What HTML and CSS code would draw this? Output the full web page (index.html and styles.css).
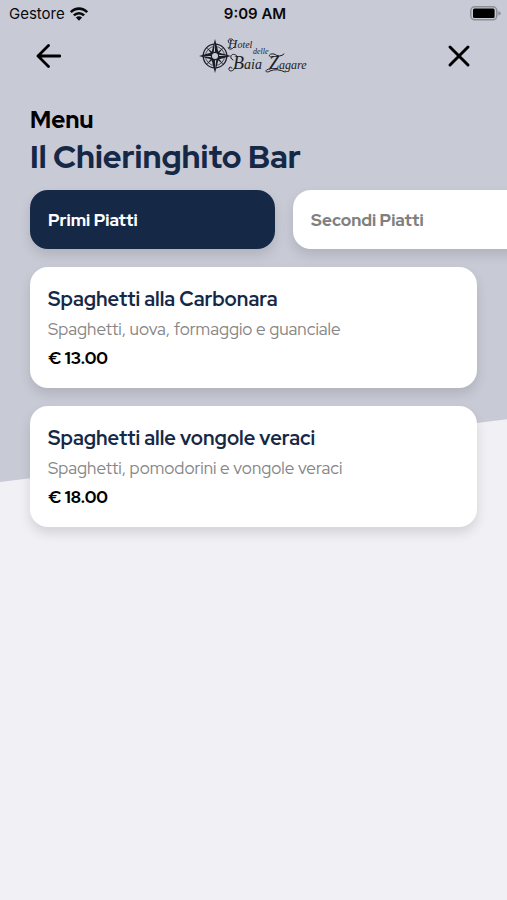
FILE: index.html
```html
<!DOCTYPE html>
<html lang="it">
<head>
<meta charset="utf-8">
<meta name="viewport" content="width=device-width, initial-scale=1">
<title>Il Chieringhito Bar</title>
<link rel="stylesheet" href="styles.css">
</head>
<body>
<div class="screen">
  <div class="status">
    <div class="carrier">
      <span>Gestore</span>
      <svg width="18" height="14" viewBox="0 0 18 14" aria-hidden="true">
        <g fill="none" stroke="#08090c" stroke-width="2.6">
          <path d="M.8 5.2C5.4.4 12.6.4 17.2 5.2"/>
          <path d="M3.9 8.4C6.7 5.5 11.3 5.5 14.1 8.4"/>
        </g>
        <path d="M5.9 10.5C7.7 8.7 10.3 8.7 12.1 10.5L9 13.7Z" fill="#08090c"/>
      </svg>
    </div>
    <time class="clock">9:09 AM</time>
    <svg class="battery" width="31" height="15" viewBox="0 0 31 15" aria-hidden="true">
      <rect x=".8" y=".8" width="26" height="13" rx="4" fill="none" stroke="#8c8e95" stroke-width="1.5"/>
      <rect x="3" y="2.5" width="21.6" height="9.6" rx="1.5" fill="#000"/>
      <path d="M28.3 5Q30.7 5.7 30.7 7.3T28.3 9.6Z" fill="#8c8e95"/>
    </svg>
  </div>

  <header class="nav">
    <button class="icon-button" type="button" aria-label="Indietro">
      <svg width="26" height="26" viewBox="0 0 26 26" fill="none" stroke="#000" stroke-width="2.8" stroke-linecap="round" stroke-linejoin="round">
        <path d="M25 13H3M13.5 2.5L3 13L13.5 23.5"/>
      </svg>
    </button>
    <svg class="logo" width="112" height="40" viewBox="0 0 112 40" role="img" aria-label="Hotel delle Baia Zagare">
      <g fill="none" stroke="#1b1d24">
        <circle cx="17" cy="20" r="11.8" stroke-width="1.3"/>
        <circle cx="17" cy="20" r="9.5" stroke-width=".7"/>
      </g>
      <g fill="#1b1d24">
        <path d="M8 11L15.5 17L17 20L14 18.5ZM26 11L18.5 17L17 20L20 18.5ZM8 29L15.5 23L17 20L14 21.5ZM26 29L18.5 23L17 20L20 21.5Z"/>
        <path d="M17 3L20.5 16.5L33 20L20.5 23.5L17 37L13.5 23.5L1 20L13.5 16.5Z"/>
      </g>
      <path d="M17 7V16L15.5 17.5ZM29 20H21L19.5 18.5ZM17 33V24L18.5 22.5ZM5 20H13L14.500 21.5Z" fill="#c8cad6"/>
      <circle cx="17" cy="20" r="3.6" fill="#c8cad6" stroke="#1b1d24" stroke-width="1.2"/>
      <g class="logo-text">
        <text x="30" y="12"><tspan font-size="13">H</tspan><tspan font-size="10">otel</tspan></text>
        <text x="55" y="18" font-size="8">delle</text>
        <text x="35" y="33"><tspan font-size="18">B</tspan><tspan font-size="14">aia</tspan></text>
        <text x="71" y="33"><tspan font-size="18">Z</tspan><tspan font-size="12">agare</tspan></text>
      </g>
      <g fill="none" stroke="#1b1d24" stroke-linecap="round">
        <path d="M36 5C34 1 28 3 31 7M30 12Q33 15 36 11"/>
        <path d="M39 20C34 15 30 22 35 24M37 32C35 36 30 36 31 32Q32 30 34 32"/>
        <path d="M75 21C70 22 70 17 76 18Q82 22 86 18M72 33C66 33 67 38 72 35Q79 32 87 36"/>
      </g>
    </svg>
    <button class="icon-button" type="button" aria-label="Chiudi">
      <svg width="26" height="26" viewBox="0 0 26 26" fill="none" stroke="#000" stroke-width="3" stroke-linecap="round">
        <path d="M4 4L22 22M22 4L4 22"/>
      </svg>
    </button>
  </header>

  <main>
    <div class="heading">
      <p class="eyebrow">Menu</p>
      <h1>Il Chieringhito Bar</h1>
    </div>
    <nav class="tabs" aria-label="Categorie">
      <button class="tab tab-active" type="button">Primi Piatti</button>
      <button class="tab" type="button">Secondi Piatti</button>
    </nav>
    <section class="dishes">
      <article class="card">
        <h2>Spaghetti alla Carbonara</h2>
        <p class="description">Spaghetti, uova, formaggio e guanciale</p>
        <p class="price">€ 13.00</p>
      </article>
      <article class="card">
        <h2>Spaghetti alle vongole veraci</h2>
        <p class="description">Spaghetti, pomodorini e vongole veraci</p>
        <p class="price">€ 18.00</p>
      </article>
    </section>
  </main>
</div>
</body>
</html>
```
FILE: styles.css
```css
* { box-sizing: border-box; }
body {
  margin: 0;
  background: #f0f0f5;
  color: #000;
  font-family: "Red Hat Display", Inter, sans-serif;
}
h1, h2, p { margin: 0; }
button { font: inherit; border: 0; cursor: pointer; }
svg { display: block; }

.screen {
  position: relative;
  min-height: 100vh;
  overflow: hidden;
}
.screen::before {
  content: "";
  position: absolute;
  z-index: -1;
  inset: 0 0 auto;
  height: 482px;
  background: #c8cad6;
  clip-path: polygon(0 0, 100% 0, 100% 87%, 0 100%);
}

.status {
  display: grid;
  grid-template-columns: 1fr auto 1fr;
  align-items: center;
  height: 27px;
  padding: 0 6px 0 9px;
  font-family: Inter, sans-serif;
  font-size: 15px;
  color: #08090c;
}
.carrier { display: flex; align-items: center; gap: 5px; }
.clock { font-weight: 600; }
.battery { justify-self: end; }

.nav {
  display: flex;
  align-items: center;
  justify-content: space-between;
  height: 58px;
  padding: 0 30px;
}
.icon-button {
  display: grid;
  place-items: center;
  width: 36px;
  height: 36px;
  padding: 0;
  background: none;
}
.logo-text {
  fill: #1b1d24;
  font-family: "Liberation Serif", serif;
  font-style: italic;
}

.heading { padding: 20px 30px 0; }
.eyebrow { font-size: 24px; line-height: 29px; font-weight: 800; }
h1 { font-size: 32px; line-height: 46px; font-weight: 800; color: #152846; }

.tabs {
  display: flex;
  gap: 18px;
  padding: 10px 30px 18px;
}
.tab {
  flex: 0 0 245px;
  height: 59px;
  padding: 0 18px;
  border-radius: 18px;
  background: #fff;
  box-shadow: 0 6px 12px rgb(0 0 0 / 12%);
  color: #808080;
  font-size: 17px;
  font-weight: 800;
  text-align: left;
}
.tab-active { background: #152846; color: #fff; }

.dishes {
  display: grid;
  gap: 18px;
  padding: 0 30px;
}
.card {
  padding: 18px;
  border-radius: 18px;
  background: #fff;
  box-shadow: 0 6px 12px rgb(0 0 0 / 12%);
}
h2 { font-size: 20px; line-height: 28px; font-weight: 700; color: #152846; }
.description { font-size: 17px; line-height: 33px; font-weight: 400; color: #868686; }
.price { font-size: 17px; line-height: 24px; font-weight: 800; }
```
